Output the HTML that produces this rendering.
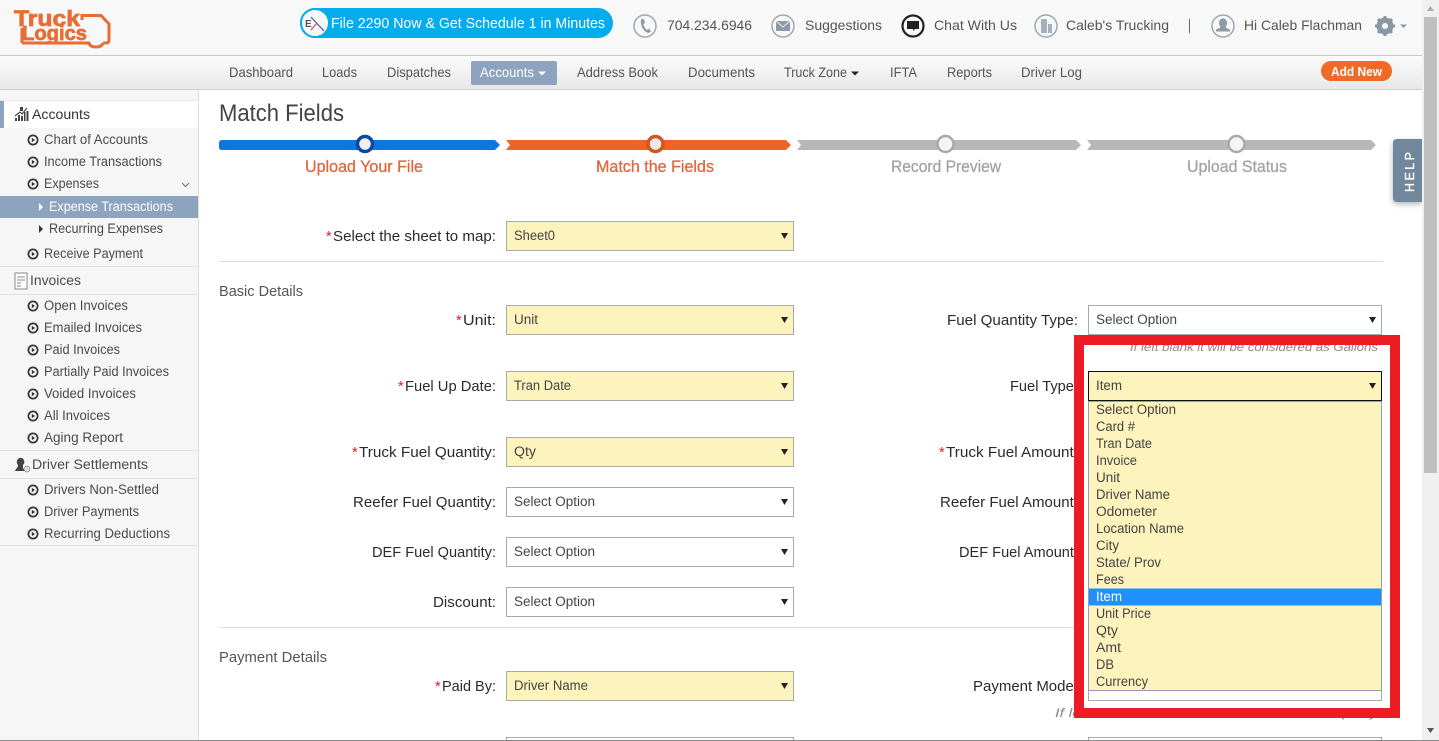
<!DOCTYPE html>
<html><head><meta charset="utf-8"><title>Match Fields</title>
<style>
html,body{margin:0;padding:0;width:1439px;height:741px;overflow:hidden;background:#fff}
svg{display:block;font-family:"Liberation Sans",sans-serif}
.t{font-size:14px;fill:#555}
.n{font-size:14px;fill:#555}
.s{font-size:13.5px;fill:#4a4a4a}
.l{font-size:14.5px;fill:#2b2b2b}
.r{fill:#e01b24;font-size:14.5px}
.v{font-size:13.5px;fill:#444}
.o{font-size:13.5px;fill:#444}
.h{font-size:12px;font-style:italic;fill:#888}
.st{font-size:16.5px;stroke-width:.3}
.box{fill:#fff;stroke:#aaa;stroke-width:1}
.yb{fill:#fdf3bd;stroke:#aaa;stroke-width:1}
.ar{fill:#222}
</style></head><body>
<svg width="1439" height="741" viewBox="0 0 1439 741" xmlns="http://www.w3.org/2000/svg">
<defs>
<linearGradient id="nav" x1="0" y1="0" x2="0" y2="1"><stop offset="0" stop-color="#fbfbfb"/><stop offset="1" stop-color="#e8e8e8"/></linearGradient>
<filter id="sh" x="-30%" y="-20%" width="160%" height="140%"><feDropShadow dx="0" dy="2" stdDeviation="3" flood-color="#000" flood-opacity=".3"/></filter>
<symbol id="b" viewBox="0 0 12 12" overflow="visible"><circle cx="6" cy="6" r="4.6" fill="none" stroke="#333" stroke-width="1.7"/><path d="M4.8 3.8L8 6L4.8 8.2Z" fill="#333"/></symbol>
</defs>

<!-- header -->
<rect width="1422" height="55" fill="#f8f8f8"/>
<rect y="55" width="1422" height="1" fill="#c9c9c9"/>
<rect y="56" width="1422" height="33" fill="url(#nav)"/>
<rect y="89" width="1422" height="1" fill="#cfcfcf"/>
<!-- logo -->
<text x="14" y="26" font-size="22" font-weight="bold" fill="#e86c33" stroke="#e86c33" stroke-width=".7" textLength="66" lengthAdjust="spacingAndGlyphs">Truck</text>
<text x="22" y="40" font-size="20" font-weight="bold" fill="#e86c33" stroke="#e86c33" stroke-width=".7" textLength="65" lengthAdjust="spacingAndGlyphs">Logics</text>
<path d="M82 20V15.500H101L109 24V40Q109 43 106 43H103" fill="none" stroke="#e86c33" stroke-width="3"/>
<path d="M22 43H89Q90 47 96 47Q102 47 103 43" fill="none" stroke="#e86c33" stroke-width="3"/>
<path d="M22 28V43" stroke="#e86c33" stroke-width="3"/>

<!-- pill -->
<rect x="300" y="8" width="313" height="30" rx="15" fill="#05aced"/>
<circle cx="315" cy="23" r="14" fill="#f7f7f7" stroke="#05aced" stroke-width="2"/>
<text x="305" y="27" font-size="10" font-weight="bold" fill="#555">E</text>
<path d="M311 17L324 31" stroke="#4a5a9a" stroke-width="1.200"/><path d="M317 23L311 30" stroke="#d3554e" stroke-width="1.200"/>
<text x="331" y="28" font-size="14.500" fill="#fff" textLength="274" lengthAdjust="spacingAndGlyphs">File 2290 Now &amp; Get Schedule 1 in Minutes</text>

<!-- top right icons -->
<circle cx="645" cy="26" r="11" fill="#f8f8f8" stroke="#9aa8b5" stroke-width="1.500"/>
<path d="M641 19.500L643.500 18.500L645 22.500L643.500 24C644 27 645.500 29 647.500 30L649 28.500L651 31.500L648.500 33C644 32 640 26 641 19.500Z" fill="#8d9aa8"/>
<text class="t" x="667" y="30" textLength="85" lengthAdjust="spacingAndGlyphs">704.234.6946</text>
<circle cx="783" cy="26" r="11" fill="#f8f8f8" stroke="#9aa8b5" stroke-width="1.500"/>
<rect x="776" y="21" width="14" height="10" fill="#8d9aa8"/><path d="M776 21L783 27L790 21" fill="none" stroke="#eee" stroke-width="1"/>
<text class="t" x="805" y="30" textLength="77" lengthAdjust="spacingAndGlyphs">Suggestions</text>
<circle cx="913" cy="26" r="10.500" fill="#fafafa" stroke="#222" stroke-width="2.200"/>
<path d="M907 21H919V29H915L913 31V29H907Z" fill="#222"/>
<text class="t" x="934" y="30" textLength="83" lengthAdjust="spacingAndGlyphs">Chat With Us</text>
<circle cx="1046" cy="26" r="11" fill="#f8f8f8" stroke="#9aa8b5" stroke-width="1.500"/>
<path d="M1041 19H1047V33H1041ZM1048 24H1052V33H1048Z" fill="#a5b0bb"/>
<text class="t" x="1066" y="30" textLength="103" lengthAdjust="spacingAndGlyphs">Caleb's Trucking</text>
<rect x="1189" y="19" width="1" height="14" fill="#666"/>
<circle cx="1223" cy="26" r="11" fill="#f8f8f8" stroke="#9aa8b5" stroke-width="1.500"/>
<path d="M1223 18.500a4 4.500 0 0 1 3 7.500c-.5 1.500 0 2 4 3.500v2h-14v-2c4-1.500 4.500-2 4-3.500a4 4.500 0 0 1 3-7.500Z" fill="#8d9aa8"/>
<text class="t" x="1244" y="30" textLength="118" lengthAdjust="spacingAndGlyphs">Hi Caleb Flachman</text>
<circle cx="1385" cy="26" r="6.500" fill="none" stroke="#8a97a5" stroke-width="4"/>
<path d="M1385 16V36M1375 26H1395M1378 19L1392 33M1392 19L1378 33" stroke="#8a97a5" stroke-width="3"/>
<circle cx="1385" cy="26" r="3" fill="#f8f8f8"/>
<path d="M1400 24.500H1407L1403.500 28Z" fill="#8a97a5"/>

<!-- nav -->
<text class="n" x="229" y="77" textLength="64" lengthAdjust="spacingAndGlyphs">Dashboard</text>
<text class="n" x="322" y="77" textLength="35" lengthAdjust="spacingAndGlyphs">Loads</text>
<text class="n" x="387" y="77" textLength="64" lengthAdjust="spacingAndGlyphs">Dispatches</text>
<rect x="471" y="61" width="86" height="24" rx="2" fill="#8ea3bd"/>
<text x="480" y="77" font-size="14" fill="#fff" textLength="54" lengthAdjust="spacingAndGlyphs">Accounts</text>
<path d="M538 71.500H546L542 75.500Z" fill="#fff"/>
<text class="n" x="577" y="77" textLength="81" lengthAdjust="spacingAndGlyphs">Address Book</text>
<text class="n" x="688" y="77" textLength="67" lengthAdjust="spacingAndGlyphs">Documents</text>
<text class="n" x="784" y="77" textLength="63" lengthAdjust="spacingAndGlyphs">Truck Zone</text>
<path d="M851 71.500H859L855 75.500Z" fill="#222"/>
<text class="n" x="890" y="77" textLength="27" lengthAdjust="spacingAndGlyphs">IFTA</text>
<text class="n" x="947" y="77" textLength="45" lengthAdjust="spacingAndGlyphs">Reports</text>
<text class="n" x="1021" y="77" textLength="61" lengthAdjust="spacingAndGlyphs">Driver Log</text>
<rect x="1321" y="61" width="71" height="20" rx="10" fill="#ee6a26"/>
<text x="1331" y="76" font-size="13" font-weight="bold" fill="#fff" textLength="51" lengthAdjust="spacingAndGlyphs">Add New</text>

<!-- sidebar -->
<rect y="90" width="198" height="651" fill="#f6f6f6"/>
<rect x="198" y="90" width="1" height="651" fill="#dcdcdc"/>
<rect y="100" width="198" height="1" fill="#e8e8e8"/>
<rect y="101" width="198" height="27" fill="#fff"/>
<rect y="101" width="4" height="27" fill="#8ea3bd"/>
<path d="M15 121V118H17V121ZM18 121V115H20V121ZM21 121V116H23V121ZM24 121V112H25.500V121ZM26.500 121V111H28.500V121Z" fill="#444"/>
<path d="M15 116L20 112L22 114L27 108" fill="none" stroke="#444" stroke-width="1.200"/>
<rect x="20" y="107" width="3" height="4" fill="#444"/>
<text x="32" y="119" font-size="14" fill="#333" textLength="58" lengthAdjust="spacingAndGlyphs">Accounts</text>
<use href="#b" x="27" y="134" width="12" height="12"/>
<text class="s" x="44" y="144" textLength="104" lengthAdjust="spacingAndGlyphs">Chart of Accounts</text>
<use href="#b" x="27" y="156" width="12" height="12"/>
<text class="s" x="44" y="166" textLength="118" lengthAdjust="spacingAndGlyphs">Income Transactions</text>
<use href="#b" x="27" y="178" width="12" height="12"/>
<text class="s" x="44" y="188" textLength="55" lengthAdjust="spacingAndGlyphs">Expenses</text>
<path d="M182 183L185.500 186.500L189 183" fill="none" stroke="#666" stroke-width="1"/>
<rect y="196" width="198" height="22" fill="#8ea3bd"/>
<path d="M39 203L43 207L39 211Z" fill="#fff"/>
<text x="49" y="211" font-size="13.500" fill="#fff" textLength="124" lengthAdjust="spacingAndGlyphs">Expense Transactions</text>
<path d="M39 225L43 229L39 233Z" fill="#333"/>
<text class="s" x="49" y="233" textLength="114" lengthAdjust="spacingAndGlyphs">Recurring Expenses</text>
<use href="#b" x="27" y="248" width="12" height="12"/>
<text class="s" x="44" y="258" textLength="99" lengthAdjust="spacingAndGlyphs">Receive Payment</text>
<rect y="266" width="198" height="1" fill="#e2e2e2"/>
<rect y="294" width="198" height="1" fill="#e2e2e2"/>
<rect x="15" y="273" width="12" height="16" fill="#fff" stroke="#888"/>
<path d="M17 277H25M17 280H25M17 283H21M17 286H21" stroke="#888" stroke-width="1"/>
<text class="s" x="30" y="285" font-size="14" textLength="51" lengthAdjust="spacingAndGlyphs">Invoices</text>
<use href="#b" x="27" y="300" width="12" height="12"/>
<text class="s" x="44" y="310" textLength="84" lengthAdjust="spacingAndGlyphs">Open Invoices</text>
<use href="#b" x="27" y="322" width="12" height="12"/>
<text class="s" x="44" y="332" textLength="98" lengthAdjust="spacingAndGlyphs">Emailed Invoices</text>
<use href="#b" x="27" y="344" width="12" height="12"/>
<text class="s" x="44" y="354" textLength="76" lengthAdjust="spacingAndGlyphs">Paid Invoices</text>
<use href="#b" x="27" y="366" width="12" height="12"/>
<text class="s" x="44" y="376" textLength="125" lengthAdjust="spacingAndGlyphs">Partially Paid Invoices</text>
<use href="#b" x="27" y="388" width="12" height="12"/>
<text class="s" x="44" y="398" textLength="92" lengthAdjust="spacingAndGlyphs">Voided Invoices</text>
<use href="#b" x="27" y="410" width="12" height="12"/>
<text class="s" x="44" y="420" textLength="66" lengthAdjust="spacingAndGlyphs">All Invoices</text>
<use href="#b" x="27" y="432" width="12" height="12"/>
<text class="s" x="44" y="442" textLength="79" lengthAdjust="spacingAndGlyphs">Aging Report</text>
<rect y="450" width="198" height="1" fill="#e2e2e2"/>
<rect y="478" width="198" height="1" fill="#e2e2e2"/>
<path d="M20 458a3.500 4 0 0 1 3 7v3l2 3H15c1-3 3-3 3-6a3.500 4 0 0 1 2-7Z" fill="#444"/><circle cx="27" cy="469" r="3" fill="#ddd" stroke="#888" stroke-width=".7"/>
<text class="s" x="32" y="469" font-size="14" textLength="116" lengthAdjust="spacingAndGlyphs">Driver Settlements</text>
<use href="#b" x="27" y="484" width="12" height="12"/>
<text class="s" x="44" y="494" textLength="115" lengthAdjust="spacingAndGlyphs">Drivers Non-Settled</text>
<use href="#b" x="27" y="506" width="12" height="12"/>
<text class="s" x="44" y="516" textLength="95" lengthAdjust="spacingAndGlyphs">Driver Payments</text>
<use href="#b" x="27" y="528" width="12" height="12"/>
<text class="s" x="44" y="538" textLength="126" lengthAdjust="spacingAndGlyphs">Recurring Deductions</text>
<rect y="545" width="198" height="1" fill="#e2e2e2"/>

<!-- title -->
<text x="219" y="121" font-size="24" fill="#444" textLength="125" lengthAdjust="spacingAndGlyphs">Match Fields</text>

<!-- steps -->
<path d="M222 140H495L500 145L495 150H222Q219 150 219 147V143Q219 140 222 140Z" fill="#0a78de"/>
<path d="M506 140H786L791 145L786 150H506L510 145Z" fill="#ec6527"/>
<path d="M797 140H1076L1081 145L1076 150H797L801 145Z" fill="#b7b7ba"/>
<path d="M1087 140H1371L1376 145L1371 150H1087L1091 145Z" fill="#b7b7ba"/>
<circle cx="365" cy="144" r="7.500" fill="#eef0f5" stroke="#0b47a5" stroke-width="3.500"/>
<circle cx="655.500" cy="144" r="7.500" fill="#eee9e6" stroke="#c85a22" stroke-width="3.500"/>
<circle cx="945.500" cy="144" r="8" fill="#f5f5f5" stroke="#a9a9ab" stroke-width="2.500"/>
<circle cx="1236.500" cy="144" r="8" fill="#f5f5f5" stroke="#a9a9ab" stroke-width="2.500"/>
<text class="st" x="305" y="172" fill="#e0683f" stroke="#e0683f" textLength="118" lengthAdjust="spacingAndGlyphs">Upload Your File</text>
<text class="st" x="596" y="172" fill="#e0683f" stroke="#e0683f" textLength="118" lengthAdjust="spacingAndGlyphs">Match the Fields</text>
<text class="st" x="891" y="172" fill="#a3a3a6" stroke="#a3a3a6" textLength="110" lengthAdjust="spacingAndGlyphs">Record Preview</text>
<text class="st" x="1187" y="172" fill="#a3a3a6" stroke="#a3a3a6" textLength="100" lengthAdjust="spacingAndGlyphs">Upload Status</text>

<!-- help + scrollbar -->
<path d="M1397 139H1422V202H1397Q1393 202 1393 198V143Q1393 139 1397 139Z" fill="#71879b" filter="url(#sh)"/>
<text transform="translate(1414,192) rotate(-90)" font-size="12.500" fill="#fff" stroke="#fff" stroke-width=".35" textLength="40">HELP</text>
<rect x="1422" width="17" height="741" fill="#f0f0f0"/>
<rect x="1424" y="17" width="13" height="456" fill="#bfbfbf"/>
<path d="M1427 11L1430.500 6L1434 11Z" fill="#aaa"/>
<path d="M1427 728H1434L1430.500 733Z" fill="#555"/>

<!-- form -->
<text class="r" x="326" y="241">*</text>
<text class="l" x="333" y="241" textLength="163" lengthAdjust="spacingAndGlyphs">Select the sheet to map:</text>
<rect class="yb" x="506.500" y="221.500" width="287" height="29"/>
<text class="v" x="514" y="240" textLength="41" lengthAdjust="spacingAndGlyphs">Sheet0</text>
<path class="ar" d="M781 233H788L784.500 239Z"/>
<rect x="219" y="261" width="1164" height="1" fill="#dcdcdc"/>
<text x="219" y="296" font-size="14.500" fill="#555" textLength="84" lengthAdjust="spacingAndGlyphs">Basic Details</text>

<text class="r" x="456" y="325">*</text>
<text class="l" x="463" y="325" textLength="33" lengthAdjust="spacingAndGlyphs">Unit:</text>
<rect class="yb" x="506.500" y="305.500" width="287" height="29"/>
<text class="v" x="514" y="324" textLength="24" lengthAdjust="spacingAndGlyphs">Unit</text>
<path class="ar" d="M781 317H788L784.500 323Z"/>
<text class="l" x="947" y="325" textLength="131" lengthAdjust="spacingAndGlyphs">Fuel Quantity Type:</text>
<rect class="box" x="1088.500" y="305.500" width="293" height="29"/>
<text class="v" x="1096" y="324" textLength="81" lengthAdjust="spacingAndGlyphs">Select Option</text>
<path class="ar" d="M1369 317H1376L1372.500 323Z"/>

<text class="r" x="398" y="391">*</text>
<text class="l" x="405" y="391" textLength="91" lengthAdjust="spacingAndGlyphs">Fuel Up Date:</text>
<rect class="yb" x="506.500" y="371.500" width="287" height="29"/>
<text class="v" x="514" y="390" textLength="57" lengthAdjust="spacingAndGlyphs">Tran Date</text>
<path class="ar" d="M781 383H788L784.500 389Z"/>
<text class="l" x="1010" y="391" textLength="68" lengthAdjust="spacingAndGlyphs">Fuel Type:</text>

<text class="r" x="352" y="457">*</text>
<text class="l" x="359" y="457" textLength="137" lengthAdjust="spacingAndGlyphs">Truck Fuel Quantity:</text>
<rect class="yb" x="506.500" y="437.500" width="287" height="29"/>
<text class="v" x="514" y="456" textLength="22" lengthAdjust="spacingAndGlyphs">Qty</text>
<path class="ar" d="M781 449H788L784.500 455Z"/>
<text class="r" x="939" y="457">*</text>
<text class="l" x="946" y="457" textLength="132" lengthAdjust="spacingAndGlyphs">Truck Fuel Amount:</text>

<text class="l" x="353" y="507" textLength="143" lengthAdjust="spacingAndGlyphs">Reefer Fuel Quantity:</text>
<rect class="box" x="506.500" y="487.500" width="287" height="29"/>
<text class="v" x="514" y="506" textLength="81" lengthAdjust="spacingAndGlyphs">Select Option</text>
<path class="ar" d="M781 499H788L784.500 505Z"/>
<text class="l" x="940" y="507" textLength="138" lengthAdjust="spacingAndGlyphs">Reefer Fuel Amount:</text>

<text class="l" x="372" y="557" textLength="124" lengthAdjust="spacingAndGlyphs">DEF Fuel Quantity:</text>
<rect class="box" x="506.500" y="537.500" width="287" height="29"/>
<text class="v" x="514" y="556" textLength="81" lengthAdjust="spacingAndGlyphs">Select Option</text>
<path class="ar" d="M781 549H788L784.500 555Z"/>
<text class="l" x="959" y="557" textLength="119" lengthAdjust="spacingAndGlyphs">DEF Fuel Amount:</text>

<text class="l" x="433" y="607" textLength="63" lengthAdjust="spacingAndGlyphs">Discount:</text>
<rect class="box" x="506.500" y="587.500" width="287" height="29"/>
<text class="v" x="514" y="606" textLength="81" lengthAdjust="spacingAndGlyphs">Select Option</text>
<path class="ar" d="M781 599H788L784.500 605Z"/>

<rect x="219" y="627" width="1164" height="1" fill="#dcdcdc"/>
<text x="219" y="662" font-size="14.500" fill="#555" textLength="108" lengthAdjust="spacingAndGlyphs">Payment Details</text>

<text class="r" x="435" y="691">*</text>
<text class="l" x="442" y="691" textLength="54" lengthAdjust="spacingAndGlyphs">Paid By:</text>
<rect class="yb" x="506.500" y="671.500" width="287" height="29"/>
<text class="v" x="514" y="690" textLength="74" lengthAdjust="spacingAndGlyphs">Driver Name</text>
<path class="ar" d="M781 683H788L784.500 689Z"/>
<text class="l" x="973" y="691" textLength="105" lengthAdjust="spacingAndGlyphs">Payment Mode:</text>
<text class="h" x="1055" y="717" textLength="323" lengthAdjust="spacingAndGlyphs">If left blank it will be considered as Company</text>
<rect class="box" x="506.500" y="737.500" width="287" height="10"/>
<rect class="box" x="1088.500" y="737.500" width="293" height="10"/>

<!-- red frame -->
<rect x="1079" y="340" width="316" height="373" fill="#fff" stroke="#ed1c24" stroke-width="10"/>
<text class="h" x="1130" y="351" textLength="248" lengthAdjust="spacingAndGlyphs">If left blank it will be considered as Gallons</text>
<rect x="1074" y="335" width="326" height="10" fill="#ed1c24"/>

<!-- open select -->
<rect x="1088.500" y="371.500" width="293" height="29" fill="#fdf3bd" stroke="#111"/>
<text class="v" x="1096" y="390" textLength="26" lengthAdjust="spacingAndGlyphs">Item</text>
<path class="ar" d="M1369 383H1376L1372.500 389Z"/>
<rect class="box" x="1088.500" y="680.500" width="293" height="20"/>
<rect x="1088.500" y="401.500" width="293" height="289" fill="#fdf3bd" stroke="#8fa0ae"/>
<rect x="1089" y="588.500" width="292" height="17" fill="#1e90ff"/>
<text class="o" x="1096" y="414" textLength="80" lengthAdjust="spacingAndGlyphs">Select Option</text>
<text class="o" x="1096" y="431" textLength="39" lengthAdjust="spacingAndGlyphs">Card #</text>
<text class="o" x="1096" y="448" textLength="56" lengthAdjust="spacingAndGlyphs">Tran Date</text>
<text class="o" x="1096" y="465" textLength="41" lengthAdjust="spacingAndGlyphs">Invoice</text>
<text class="o" x="1096" y="482" textLength="24" lengthAdjust="spacingAndGlyphs">Unit</text>
<text class="o" x="1096" y="499" textLength="74" lengthAdjust="spacingAndGlyphs">Driver Name</text>
<text class="o" x="1096" y="516" textLength="61" lengthAdjust="spacingAndGlyphs">Odometer</text>
<text class="o" x="1096" y="533" textLength="88" lengthAdjust="spacingAndGlyphs">Location Name</text>
<text class="o" x="1096" y="550" textLength="23" lengthAdjust="spacingAndGlyphs">City</text>
<text class="o" x="1096" y="567" textLength="65" lengthAdjust="spacingAndGlyphs">State/ Prov</text>
<text class="o" x="1096" y="584" textLength="28" lengthAdjust="spacingAndGlyphs">Fees</text>
<text x="1096" y="601" font-size="13.500" fill="#fff" textLength="26" lengthAdjust="spacingAndGlyphs">Item</text>
<text class="o" x="1096" y="618" textLength="55" lengthAdjust="spacingAndGlyphs">Unit Price</text>
<text class="o" x="1096" y="635" textLength="22" lengthAdjust="spacingAndGlyphs">Qty</text>
<text class="o" x="1096" y="652" textLength="25" lengthAdjust="spacingAndGlyphs">Amt</text>
<text class="o" x="1096" y="669" textLength="18" lengthAdjust="spacingAndGlyphs">DB</text>
<text class="o" x="1096" y="686" textLength="52" lengthAdjust="spacingAndGlyphs">Currency</text>

<rect y="740" width="1439" height="1" fill="#8a8a8a"/>
</svg>
</body></html>
